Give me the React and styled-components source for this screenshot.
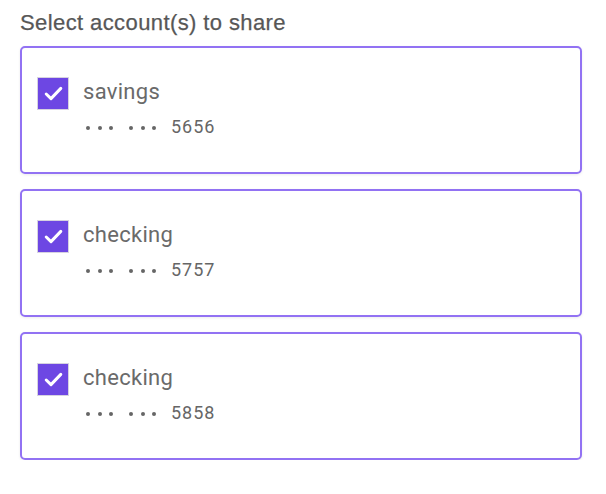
import React from "react";
import styled, { createGlobalStyle } from "styled-components";

const Global = createGlobalStyle`
  html, body { margin: 0; padding: 0; background: #fff; }
  body { font-family: "Liberation Sans", Arial, sans-serif; }
`;

const Page = styled.div`
  padding: 10px 24px 0 20px;
  display: flex;
  flex-direction: column;
`;

const Title = styled.h2`
  margin: 0 0 10px 0;
  font-size: 22px;
  line-height: 26px;
  font-weight: 400;
  letter-spacing: 0.4px;
  color: #575757;
  -webkit-text-stroke: 0.25px #575757;
`;

const List = styled.div`
  display: flex;
  flex-direction: column;
  gap: 15px;
`;

const Card = styled.label`
  box-sizing: border-box;
  height: 128px;
  border: 2px solid #9272f3;
  border-radius: 5px;
  box-shadow: 0 1px 3px rgba(0, 0, 0, 0.08);
  display: flex;
  align-items: flex-start;
  gap: 14px;
  padding: 29px 0 0 15px;
  cursor: pointer;
`;

const Box = styled.span`
  box-sizing: border-box;
  width: 32px;
  height: 33px;
  border: 1px solid #d6d2e0;
  background: #6d47e3;
  display: flex;
  align-items: center;
  justify-content: center;
  flex-shrink: 0;
`;

const Info = styled.div`
  display: flex;
  flex-direction: column;
  padding-top: 2px;
`;

const Name = styled.div`
  font-family: Roboto, "Liberation Sans", sans-serif;
  font-size: 22px;
  line-height: 26px;
  letter-spacing: 0.3px;
  color: #6a6a6a;
`;

const Number = styled.div`
  margin-top: 12px;
  font-family: Roboto, "Liberation Sans", sans-serif;
  font-size: 18px;
  line-height: 20px;
  color: #666;
  display: flex;
  align-items: center;
  gap: 16px;
  padding-left: 3px;
`;

const Dots = styled.span`
  display: flex;
  gap: 7.5px;
  padding-top: 1px;
`;

const Dot = styled.span`
  width: 4px;
  height: 4px;
  border-radius: 50%;
  background: #666;
`;

const Last = styled.span`
  margin-left: -1px;
  letter-spacing: 1px;
`;

const Check = () => (
  <svg width="19" height="15" viewBox="0 0 19 15" fill="none">
    <path d="M2.2 8 L7 12.6 L16.8 2.4" stroke="#fff" strokeWidth="3" strokeLinecap="round" strokeLinejoin="round" />
  </svg>
);

const accounts = [
  { name: "savings", last: "5656" },
  { name: "checking", last: "5757" },
  { name: "checking", last: "5858" },
];

const Mask = () => (
  <Dots>
    <Dot />
    <Dot />
    <Dot />
  </Dots>
);

export default function App() {
  return (
    <>
      <Global />
      <Page>
        <Title>Select account(s) to share</Title>
        <List>
          {accounts.map((a, i) => (
            <Card key={i}>
              <Box>
                <Check />
              </Box>
              <Info>
                <Name>{a.name}</Name>
                <Number>
                  <Mask />
                  <Mask />
                  <Last>{a.last}</Last>
                </Number>
              </Info>
            </Card>
          ))}
        </List>
      </Page>
    </>
  );
}
